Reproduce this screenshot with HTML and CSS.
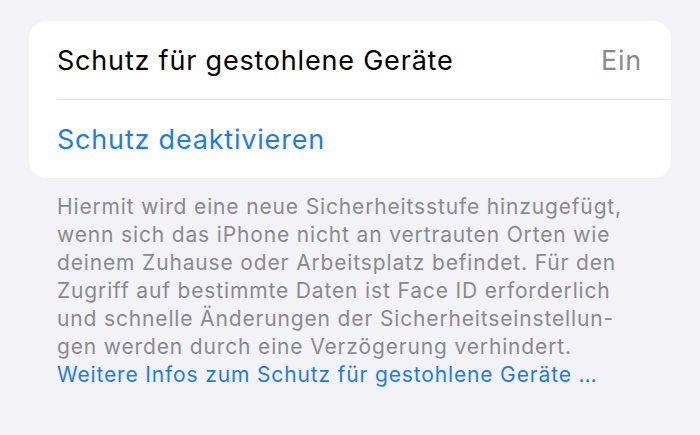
FILE: index.html
```html
<!DOCTYPE html>
<html lang="de">
<head>
    <meta charset="UTF-8">
    <meta name="viewport" content="width=device-width, initial-scale=1.0">
    <title>Schutz für gestohlene Geräte</title>
    <link rel="stylesheet" href="styles.css">
</head>
<body>
    <div class="settings-page">
        <div class="settings-group">
            <div class="settings-row">
                <span class="row-label">Schutz für gestohlene Geräte</span>
                <span class="row-value">Ein</span>
            </div>
            <div class="settings-divider"></div>
            <div class="settings-row">
                <span class="row-action">Schutz deaktivieren</span>
            </div>
        </div>
        <p class="settings-footer">
            Hiermit wird eine neue Sicherheitsstufe hinzugefügt,<br>
            wenn sich das iPhone nicht an vertrauten Orten wie<br>
            deinem Zuhause oder Arbeitsplatz befindet. Für den<br>
            Zugriff auf bestimmte Daten ist Face ID erforderlich<br>
            und schnelle Änderungen der Sicherheitseinstellun-<br>
            gen werden durch eine Verzögerung verhindert.<br>
            <a class="footer-link" href="#">Weitere Infos zum Schutz für gestohlene Geräte …</a>
        </p>
    </div>
</body>
</html>
```

FILE: styles.css
```css
body {
    font-family: Inter, "Noto Sans", sans-serif;
    margin: 0;
    padding: 0;
    background-color: #f2f2f7;
}
.settings-page {
    padding: 21px 29px;
}
.settings-group {
    background: #ffffff;
    border-radius: 18px;
}
.settings-row {
    display: flex;
    align-items: center;
    justify-content: space-between;
    height: 78px;
    padding: 0 29px 0 28px;
    font-size: 27px;
    letter-spacing: 0.8px;
}
.row-label {
    color: #000000;
}
.row-value {
    color: #8a8a8e;
}
.row-action {
    color: #1a7cf0;
}
.settings-divider {
    height: 1px;
    margin-left: 28px;
    background: #e3e3e6;
}
.settings-footer {
    margin: 15px 0 0;
    padding-left: 28px;
    font-size: 21px;
    line-height: 28px;
    letter-spacing: 0.85px;
    color: #8a8a8e;
}
.footer-link {
    color: #1a7cf0;
    text-decoration: none;
}
```
